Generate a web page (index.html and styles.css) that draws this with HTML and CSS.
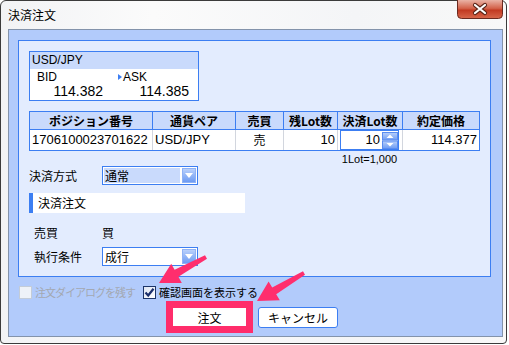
FILE: index.html
```html
<!DOCTYPE html>
<html lang="ja">
<head>
<meta charset="utf-8">
<title>決済注文</title>
<link rel="stylesheet" href="styles.css">
</head>
<body>
<div class="window">
  <div class="titlebar">
    <span class="title">決済注文</span>
    <div class="close">
      <svg width="46" height="19" viewBox="0 0 46 19">
        <defs>
          <linearGradient id="cg" x1="0" y1="0" x2="0" y2="1">
            <stop offset="0" stop-color="#eab3a6"/>
            <stop offset="0.45" stop-color="#d3624a"/>
            <stop offset="0.55" stop-color="#c23a22"/>
            <stop offset="1" stop-color="#d8684c"/>
          </linearGradient>
        </defs>
        <path d="M0.5 0 V14.5 Q0.5 18.5 4.5 18.5 H41.5 Q45.5 18.5 45.5 14.5 V0" fill="url(#cg)" stroke="#6b2a20"/>
        <path d="M18 5 L28 13 M28 5 L18 13" stroke="#5a2418" stroke-width="4.2" stroke-linecap="round"/>
        <path d="M18 5 L28 13 M28 5 L18 13" stroke="#ffffff" stroke-width="2.2" stroke-linecap="round"/>
      </svg>
    </div>
  </div>
  <div class="client">
    <div class="panel">
      <div class="rate">
        <div class="rate-head">USD/JPY</div>
        <div class="rate-body">
          <div class="rate-col bid">
            <div class="rate-lbl">BID</div>
            <div class="rate-val">114.382</div>
          </div>
          <div class="rate-col ask">
            <div class="rate-lbl"><span class="tri"></span>ASK</div>
            <div class="rate-val">114.385</div>
          </div>
        </div>
      </div>
      <table class="pos">
        <colgroup>
          <col class="c1"><col class="c2"><col class="c3"><col class="c4"><col class="c5"><col class="c6">
        </colgroup>
        <thead>
          <tr>
            <th>ポジション番号</th>
            <th>通貨ペア</th>
            <th>売買</th>
            <th>残Lot数</th>
            <th>決済Lot数</th>
            <th>約定価格</th>
          </tr>
        </thead>
        <tbody>
          <tr>
            <td class="num left">1706100023701622</td>
            <td class="left">USD/JPY</td>
            <td class="center">売</td>
            <td class="num right">10</td>
            <td class="spincell">
              <div class="spin">
                <span class="spin-val">10</span>
                <svg class="spin-btn" width="16" height="17" viewBox="0 0 16 17">
                  <defs>
                    <linearGradient id="sg" x1="0" y1="0" x2="0" y2="1">
                      <stop offset="0" stop-color="#b9d0fb"/>
                      <stop offset="1" stop-color="#6d9bf3"/>
                    </linearGradient>
                  </defs>
                  <rect x="0.5" y="0.5" width="15" height="7.5" fill="url(#sg)" stroke="#5a8cf0"/>
                  <rect x="0.5" y="9" width="15" height="7.5" fill="url(#sg)" stroke="#5a8cf0"/>
                  <path d="M4.5 6 L8 2.5 L11.5 6 Z" fill="#fff"/>
                  <path d="M4.5 11 L8 14.5 L11.5 11 Z" fill="#fff"/>
                </svg>
              </div>
            </td>
            <td class="num right">114.377</td>
          </tr>
        </tbody>
      </table>
      <div class="lotnote">1Lot=1,000</div>
      <div class="row method">
        <span class="label">決済方式</span>
        <div class="select focused">
          <span class="sel-text">通常</span>
          <span class="dd"></span>
        </div>
      </div>
      <div class="section">決済注文</div>
      <div class="row side">
        <span class="label ind">売買</span>
        <span>買</span>
      </div>
      <div class="row cond">
        <span class="label ind">執行条件</span>
        <div class="select">
          <span class="sel-text">成行</span>
          <span class="dd"></span>
        </div>
      </div>
    </div>
    <div class="checks">
      <label class="check disabled"><span class="box"></span><span class="cl">注文ダイアログを残す</span></label>
      <label class="check checked"><span class="box">
        <svg width="11" height="11" viewBox="0 0 11 11"><path d="M1.5 5.5 L4.2 8.5 L9.5 1.8" fill="none" stroke="#1b2f6b" stroke-width="2.2"/></svg>
      </span><span class="cl">確認画面を表示する</span></label>
    </div>
    <div class="buttons">
      <div class="btn primary">注文</div>
      <div class="btn">キャンセル</div>
    </div>
  </div>
  <svg class="arrows" width="509" height="345" viewBox="0 0 509 345">
    <polygon points="159,283 181.8,282.9 178.4,276.8 207,258.8 205,255.3 174.6,269.8 171.2,263.7" fill="#ff2e6d"/>
    <polygon points="257,301 279.8,300.2 276.2,294.2 305,274.7 303,271.3 272.2,287.4 268.6,281.4" fill="#ff2e6d"/>
  </svg>
</div>
</body>
</html>
```
FILE: styles.css
```css
html, body {
  margin: 0;
  padding: 0;
}

body {
  background: #ffffff;
  font-family: "Liberation Sans", "Noto Sans CJK JP", sans-serif;
  font-size: 12px;
  color: #000000;
}

.window {
  position: relative;
  width: 507px;
  height: 344px;
  box-sizing: border-box;
  border: 1px solid #3b3b3b;
  border-radius: 6px 6px 4px 4px;
  background: linear-gradient(90deg, #f2f3f5, #fbfbfb 30%, #f4f5f7 70%, #f8f8f8);
  display: flex;
  flex-direction: column;
}

.titlebar {
  height: 28px;
  display: flex;
  align-items: flex-start;
  flex-shrink: 0;
}

.title {
  margin: 6px 0 0 7px;
  font-family: "Noto Sans CJK JP", sans-serif;
  font-size: 12px;
  line-height: 16px;
}

.close {
  margin: -1px 3px 0 auto;
  width: 46px;
  height: 19px;
}

.close svg {
  display: block;
}

.client {
  margin: 0 3px 0 7px;
  width: 495px;
  height: 308px;
  box-sizing: border-box;
  border: 1px solid #8393ab;
  background: #b2cbfb;
  padding: 10px 11px 0 9px;
  flex-shrink: 0;
}

.panel {
  border: 1px solid #3c7ef2;
  background: #e3ecfe;
  padding: 10px 10px 10px 10px;
}

/* rate box */
.rate {
  width: 170px;
  height: 50px;
  box-sizing: border-box;
  border: 1px solid #3c7ef2;
  background: #ffffff;
}

.rate-head {
  height: 17px;
  line-height: 17px;
  background: #c9dafc;
  padding-left: 2px;
  font-size: 12px;
}

.rate-body {
  display: flex;
  padding-top: 1px;
}

.rate-col {
  display: flex;
  flex-direction: column;
}

.bid {
  width: 86px;
  padding: 0 13px 0 7px;
  box-sizing: border-box;
}

.ask {
  width: 82px;
  padding: 0 9px 0 2px;
  box-sizing: border-box;
}

.rate-lbl {
  line-height: 14px;
  font-size: 12px;
  display: flex;
  align-items: center;
}

.rate-val {
  line-height: 15px;
  font-size: 14px;
  text-align: right;
}

.tri {
  width: 0;
  height: 0;
  border-left: 4px solid #3c7ef2;
  border-top: 3px solid transparent;
  border-bottom: 3px solid transparent;
  margin-right: 1px;
}

/* positions table */
.pos {
  margin-top: 10px;
  width: 451px;
  table-layout: fixed;
  border-collapse: separate;
  border-spacing: 0;
  border: 1px solid #3c7ef2;
  box-sizing: border-box;
}

.c1 { width: 123px; }
.c2 { width: 83px; }
.c3 { width: 48px; }
.c4 { width: 54px; }
.c5 { width: 65px; }
.c6 { width: 76px; }

.pos th,
.pos td {
  padding: 0;
  box-sizing: border-box;
  white-space: nowrap;
  overflow: hidden;
}

.pos th {
  height: 18px;
  line-height: 17px;
  background: #c9dafc;
  border-right: 1px solid #3c7ef2;
  border-bottom: 1px solid #3c7ef2;
  font-family: "Noto Sans CJK JP", sans-serif;
  font-weight: bold;
  font-size: 12px;
  text-align: center;
}

.pos td {
  height: 20px;
  line-height: 20px;
  background: #ffffff;
  border-right: 1px solid #d2d6de;
  font-size: 13px;
}

.pos th:last-child,
.pos td:last-child {
  border-right: none;
}

.pos .left { padding-left: 2px; }
.pos .right { text-align: right; padding-right: 2px; }
.pos .center { text-align: center; font-family: "Noto Sans CJK JP", sans-serif; font-size: 12px; }

.pos td.spincell {
  padding-left: 2px;
  vertical-align: top;
}

.spin {
  width: 59px;
  height: 20px;
  box-sizing: border-box;
  border: 1px solid #3c7ef2;
  display: flex;
  align-items: center;
  justify-content: flex-end;
  background: #ffffff;
}

.spin-val {
  font-size: 13px;
  line-height: 16px;
  margin-right: 2px;
}

.spin-btn {
  display: block;
}

.lotnote {
  margin: 2px 0 0 308px;
  width: 65px;
  text-align: center;
  font-size: 11px;
  line-height: 12px;
}

/* form rows */
.row {
  display: flex;
  align-items: center;
  font-family: "Noto Sans CJK JP", sans-serif;
  font-size: 12px;
}

.label {
  width: 73px;
  flex-shrink: 0;
}

.label.ind {
  width: 68px;
  padding-left: 5px;
}

.method {
  height: 20px;
}

.side {
  margin-top: 10px;
  height: 19px;
}

.cond {
  margin-top: 5px;
  height: 19px;
}

.select {
  width: 96px;
  height: 19px;
  box-sizing: border-box;
  border: 1px solid #3c7ef2;
  background: #ffffff;
  display: flex;
  padding: 1px;
  gap: 2px;
}

.sel-text {
  flex: 1;
  line-height: 15px;
  padding-left: 1px;
}

.select.focused .sel-text {
  background: #c9dafc;
}

.dd {
  width: 14px;
  background: linear-gradient(#b9d0fb, #6d9bf3);
  border: 1px solid #8fb2f6;
  box-sizing: border-box;
  display: flex;
  align-items: center;
  justify-content: center;
}

.dd::after {
  content: "";
  width: 0;
  height: 0;
  border-top: 5px solid #ffffff;
  border-left: 4px solid transparent;
  border-right: 4px solid transparent;
}

.section {
  margin-top: 8px;
  width: 216px;
  height: 20px;
  box-sizing: border-box;
  background: #ffffff;
  border-left: 4px solid #3c7ef2;
  padding-left: 5px;
  line-height: 20px;
  font-family: "Noto Sans CJK JP", sans-serif;
  font-size: 12px;
}

/* checkboxes */
.checks {
  margin-top: 7px;
  height: 16px;
  display: flex;
  align-items: center;
  font-family: "Noto Sans CJK JP", sans-serif;
  font-size: 11px;
}

.check {
  display: flex;
  align-items: center;
  gap: 3px;
  line-height: 16px;
}

.check .box {
  width: 13px;
  height: 13px;
  box-sizing: border-box;
  display: flex;
  align-items: center;
  justify-content: center;
}

.check.disabled {
  margin-left: 1px;
  color: #a3a8b2;
}

.check.disabled .cl {
  width: 100px;
  letter-spacing: -1px;
  white-space: nowrap;
}

.check.disabled .box {
  border: 1px solid #c3ccd8;
  background: #eef2f8;
}

.check.checked {
  margin-left: 8px;
}

.check.checked .cl {
  white-space: nowrap;
}

.check.checked .box {
  border: 1px solid #1c3568;
  background: linear-gradient(135deg, #dfe6f3, #ffffff);
}

.check.checked .box svg {
  display: block;
}

/* buttons */
.buttons {
  margin-top: 1px;
  display: flex;
  align-items: center;
  padding-left: 148px;
  font-family: "Noto Sans CJK JP", sans-serif;
  font-size: 12px;
}

.btn {
  width: 80px;
  height: 21px;
  box-sizing: border-box;
  border: 1px solid #3c7ef2;
  border-radius: 3px;
  background: #ffffff;
  display: flex;
  align-items: center;
  justify-content: center;
  margin-left: 5px;
}

.btn.primary {
  width: 87px;
  height: 32px;
  margin-left: 0;
  border: 7px solid #ff2d6b;
  border-radius: 0;
}

/* annotation arrows */
.arrows {
  position: absolute;
  left: -1px;
  top: -1px;
  pointer-events: none;
}
```
